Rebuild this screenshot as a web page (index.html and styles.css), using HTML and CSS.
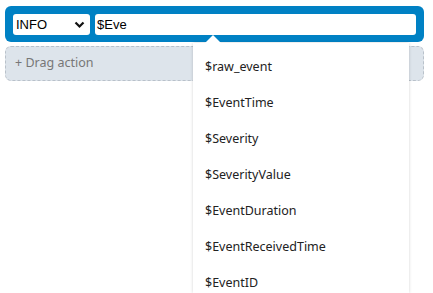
FILE: index.html
```html
<!DOCTYPE html>
<html>
<head>
<meta charset="utf-8">
<link rel="stylesheet" href="styles.css">
</head>
<body>
<div class="page">
  <div class="bar">
    <div class="select">
      <span class="select-text">INFO</span>
      <svg class="chev" width="11" height="8" viewBox="0 0 11 8"><path d="M1.5 1.5 L5.5 5.5 L9.5 1.5" fill="none" stroke="#111" stroke-width="2.2"/></svg>
    </div>
    <div class="input">$Eve</div>
  </div>
  <div class="drag">+ Drag action</div>
</div>
<div class="dropdown">
  <div class="caret"></div>
  <div class="item">$raw_event</div>
  <div class="item">$EventTime</div>
  <div class="item">$Severity</div>
  <div class="item">$SeverityValue</div>
  <div class="item">$EventDuration</div>
  <div class="item">$EventReceivedTime</div>
  <div class="item">$EventID</div>
</div>
</body>
</html>
```
FILE: styles.css
```css
html, body {
  margin: 0;
  padding: 0;
  background: #fff;
  overflow: hidden;
}
body {
  width: 433px;
  height: 293px;
  position: relative;
}
.page {
  padding: 6px 9px 0 5px;
}
.bar {
  background: #0081c4;
  border-radius: 6px;
  padding: 8px 8px 7px 8px;
  display: flex;
  gap: 5px;
  height: 21px;
}
.select {
  width: 77px;
  height: 21px;
  background: #fff;
  border-radius: 3px;
  display: flex;
  align-items: center;
  justify-content: space-between;
  padding: 0 5px 0 3px;
  box-sizing: border-box;
  font-family: "Liberation Sans", Arial, sans-serif;
  font-size: 13px;
  color: #000;
}
.chev { margin-top: 1px; }
.input {
  flex: 1;
  height: 21px;
  background: #fff;
  border-radius: 3px;
  display: flex;
  align-items: center;
  padding-left: 2px;
  font-family: "Liberation Sans", Arial, sans-serif;
  font-size: 13px;
  color: #000;
}
.drag {
  margin-top: 4px;
  height: 35px;
  box-sizing: border-box;
  border: 1px dashed #b9c1ca;
  border-radius: 6px;
  background: #dde4eb;
  display: flex;
  align-items: center;
  padding: 0 0 2px 9px;
  font-family: "Noto Sans", "Open Sans", sans-serif;
  font-size: 12.5px;
  color: #777;
}
.dropdown {
  position: absolute;
  left: 193px;
  top: 43px;
  width: 216px;
  height: 250px;
  background: #fff;
  box-shadow: 0 0 3px rgba(0,0,0,0.18);
  padding-top: 5px;
  box-sizing: border-box;
  overflow: visible;
}
.caret {
  position: absolute;
  left: 12px;
  top: -8px;
  width: 0;
  height: 0;
  border-left: 8px solid transparent;
  border-right: 8px solid transparent;
  border-bottom: 8px solid #fff;
}
.item {
  height: 36px;
  display: flex;
  align-items: center;
  padding-left: 12px;
  font-family: "Noto Sans", "Open Sans", sans-serif;
  font-size: 12.5px;
  color: #222;
}
```
